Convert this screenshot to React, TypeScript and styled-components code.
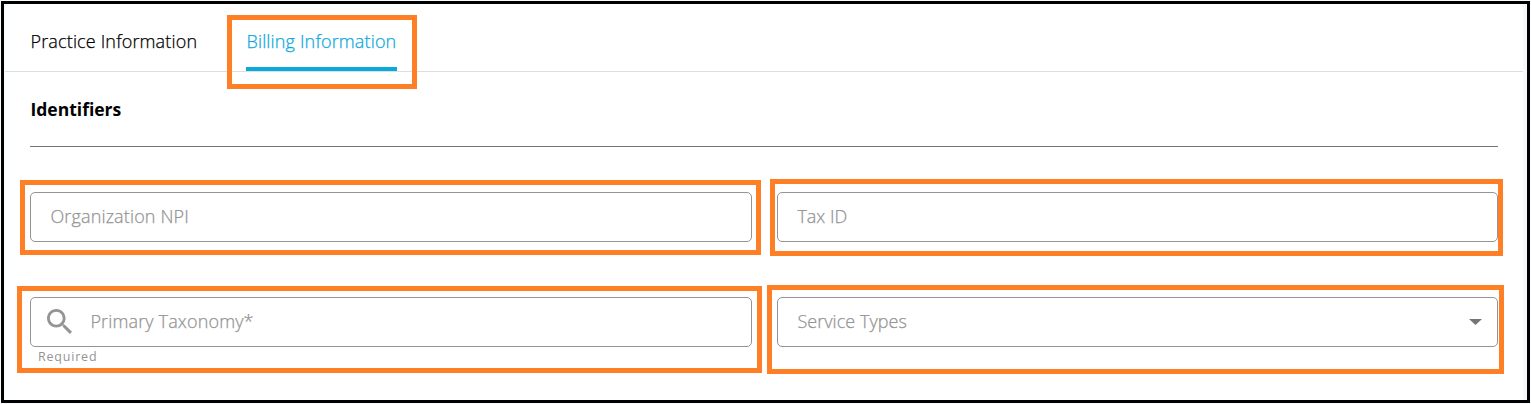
import React from 'react';
import styled, { createGlobalStyle } from 'styled-components';

const GlobalStyle = createGlobalStyle`
  * { box-sizing: border-box; }
  body {
    margin: 0;
    background: #f7fbfb;
    font-family: 'Open Sans', 'Noto Sans', sans-serif;
    overflow: hidden;
  }
`;

const Frame = styled.div`
  width: 1529px;
  height: 402px;
  margin: 1px;
  border: 3px solid #000;
  padding: 0 4px 0 1px;
  background: #f3fafb;
`;

const Card = styled.main`
  height: 100%;
  background: #fff;
  border-radius: 4px 4px 0 0;
`;

const Tabs = styled.nav`
  display: flex;
  gap: 49px;
  height: 68px;
  padding-left: 25px;
  border-bottom: 1px solid #dedede;
`;

const Tab = styled.div<{ $active?: boolean; $width: number }>`
  position: relative;
  width: ${(p) => p.$width}px;
  height: 67px;
  padding: 25px 0 0 0.5px;
  border-bottom: 4px solid ${(p) => (p.$active ? '#0ba8dc' : 'transparent')};
  color: ${(p) => (p.$active ? '#0ba8dc' : '#000')};
  font-size: 18px;
  font-weight: 300;
  letter-spacing: 0.15px;
  -webkit-text-stroke: 0.25px currentColor;
  line-height: 24px;
  white-space: nowrap;
`;

const Highlight = styled.span<{ $inset: string }>`
  position: absolute;
  inset: ${(p) => p.$inset};
  border: 5px solid #ff7f27;
  pointer-events: none;
`;

const Section = styled.section`
  padding: 25px 25px 0;
`;

const Heading = styled.h2`
  margin: 0;
  height: 50px;
  padding-left: 0.5px;
  border-bottom: 1px solid #757575;
  font-size: 17.5px;
  font-weight: 700;
  line-height: 24px;
`;

const Grid = styled.div`
  display: grid;
  grid-template-columns: 722px 721px;
  column-gap: 25px;
  grid-auto-rows: 105px;
  padding-top: 45px;
`;

const Field = styled.div`
  position: relative;
  height: 50px;
`;

const Control = styled.div`
  display: flex;
  align-items: center;
  height: 50px;
  padding: 0 15px 0 19px;
  border: 1px solid #949494;
  border-radius: 5px;
  color: #949494;
`;

const Label = styled.span<{ $spacing?: number }>`
  flex: 1;
  font-size: 18px;
  font-weight: 300;
  letter-spacing: ${(p) => p.$spacing ?? 0.15}px;
  -webkit-text-stroke: 0.25px currentColor;
  line-height: 24px;
  padding: 0 0 2px 0.4px;
  white-space: nowrap;
`;

const Helper = styled.div`
  padding-left: 8px;
  color: #949494;
  font-size: 12.5px;
  line-height: 20px;
  letter-spacing: 0.8px;
`;

const SearchIcon = styled.svg`
  width: 25px;
  height: 25px;
  margin: -1px 18px 0 -3px;
  fill: #949494;
`;

const Arrow = styled.svg`
  width: 13px;
  height: 6px;
  fill: #757575;
`;

export default function App() {
  return (
    <>
      <GlobalStyle />
      <Frame>
        <Card>
          <Tabs>
            <Tab $width={167}>Practice Information</Tab>
            <Tab $active $width={151}>
              Billing Information
              <Highlight $inset="11px -20px -22px -19px" />
            </Tab>
          </Tabs>
          <Section>
            <Heading>Identifiers</Heading>
            <Grid>
              <Field>
                <Control><Label>Organization NPI</Label></Control>
                <Highlight $inset="-12px -9px -13px -10px" />
              </Field>
              <Field>
                <Control><Label $spacing={0}>Tax ID</Label></Control>
                <Highlight $inset="-13px -5px -14px -7px" />
              </Field>
              <Field>
                <Control>
                  <SearchIcon viewBox="3 3 17.5 17.5">
                    <path d="M15.5 14h-.79l-.28-.27C15.41 12.59 16 11.11 16 9.5 16 5.91 13.09 3 9.5 3S3 5.91 3 9.5 5.91 16 9.5 16c1.61 0 3.09-.59 4.23-1.57l.27.28v.79l5 4.99L20.49 19l-4.99-5zm-6 0C7.01 14 5 11.99 5 9.5S7.01 5 9.5 5 14 7.01 14 9.5 11.99 14 9.5 14z" />
                  </SearchIcon>
                  <Label>Primary Taxonomy*</Label>
                </Control>
                <Helper>Required</Helper>
                <Highlight $inset="-11px -10px -26px -13px" />
              </Field>
              <Field>
                <Control>
                  <Label $spacing={0.05}>Service Types</Label>
                  <Arrow viewBox="0 0 13 6"><path d="M0 0h13L6.5 6z" /></Arrow>
                </Control>
                <Highlight $inset="-12px -6px -27px -10px" />
              </Field>
            </Grid>
          </Section>
        </Card>
      </Frame>
    </>
  );
}
